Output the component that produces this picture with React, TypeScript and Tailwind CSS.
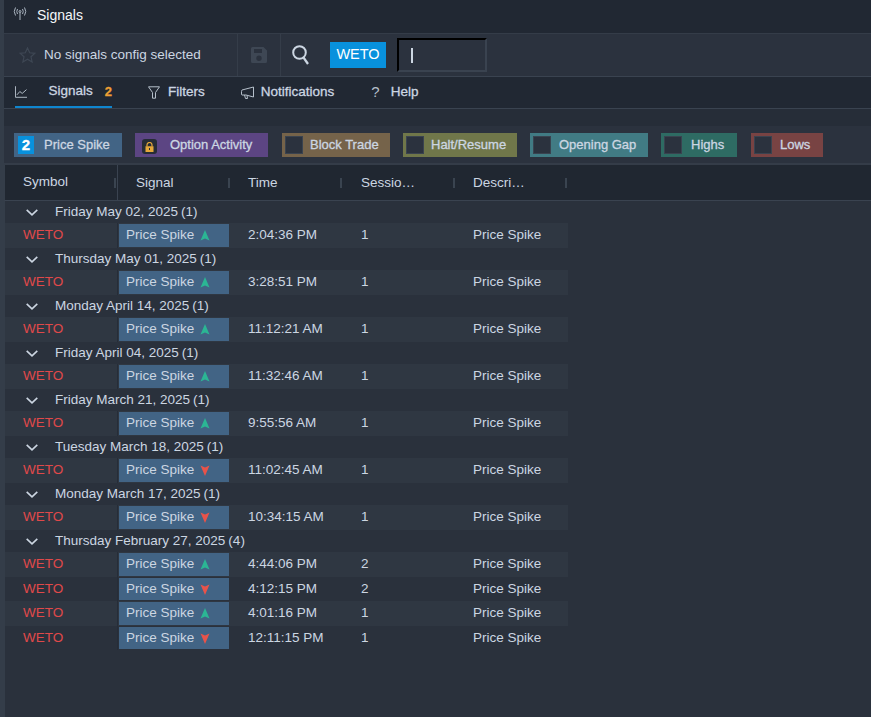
import React from "react";

const font = { fontFamily: '"Liberation Sans", Arial, sans-serif' };

function Tri({ up }: { up: boolean }) {
  return (
    <svg width="10" height="11" viewBox="0 0 10 11" className="ml-[6px]">
      {up ? <path d="M5 0 L9.5 10.5 L5 8.5 L0.5 10.5 Z" fill="#2bb694" /> : <path d="M5 11 L9.5 0.5 L5 2.5 L0.5 0.5 Z" fill="#e8534a" />}
    </svg>
  );
}

function Antenna() {
  return (
    <svg width="14" height="14" viewBox="0 0 14 14" fill="none" stroke="#aab4c0" strokeWidth="1">
      <circle cx="7" cy="4.5" r="1" />
      <path d="M7 5.5 L7 13" />
      <path d="M4.5 2 Q3 4.5 4.5 7 M9.5 2 Q11 4.5 9.5 7 M2.5 0.5 Q0 4.5 2.5 8.5 M11.5 0.5 Q14 4.5 11.5 8.5" />
    </svg>
  );
}

function StarIcon() {
  return (
    <svg width="17" height="16" viewBox="0 0 17 16" fill="none" stroke="#3e4754" strokeWidth="1.2">
      <path d="M8.5 1 L10.7 5.8 L15.9 6.3 L12 9.8 L13.1 15 L8.5 12.3 L3.9 15 L5 9.8 L1.1 6.3 L6.3 5.8 Z" />
    </svg>
  );
}

function SaveIcon() {
  return (
    <svg width="16" height="16" viewBox="0 0 16 16">
      <path fillRule="evenodd" d="M1.5 0 H12.5 L16 3.5 V14.5 A1.5 1.5 0 0 1 14.5 16 H1.5 A1.5 1.5 0 0 1 0 14.5 V1.5 A1.5 1.5 0 0 1 1.5 0 Z M3 2 V6 H11 V2 Z M8 8.5 A2.7 2.7 0 1 0 8 13.9 A2.7 2.7 0 1 0 8 8.5 Z" fill="#3e4754" />
    </svg>
  );
}

function SearchIcon() {
  return (
    <svg width="18" height="20" viewBox="0 0 18 20" fill="none" stroke="#ccd6e2" strokeWidth="2">
      <circle cx="7.5" cy="7.5" r="6.3" />
      <path d="M11.5 12.5 L16 19" strokeWidth="2.2" />
    </svg>
  );
}

function ChartIcon() {
  return (
    <svg width="13" height="12" viewBox="0 0 13 12" fill="none" stroke="#b5bfca" strokeWidth="1">
      <path d="M0.5 0 V11.5 H13" />
      <path d="M2 9 L5 5.5 L7.5 7.5 L12 3.5" />
    </svg>
  );
}

function FilterIcon() {
  return (
    <svg width="12" height="13" viewBox="0 0 12 13" fill="none" stroke="#b5bfca" strokeWidth="1">
      <path d="M0.5 0.8 H11.5 L7.5 6.5 V12.2 H4.5 V6.5 Z" />
    </svg>
  );
}

function HornIcon() {
  return (
    <svg width="13" height="13" viewBox="0 0 13 13" fill="none" stroke="#b5bfca" strokeWidth="1">
      <path d="M12.5 1 V11 L5 9 H1 Q0.5 9 0.5 8 V5.5 Q0.5 4.5 1 4 Z" />
      <path d="M3.5 9 L4.5 12.5 H6.5 L6 9.5" />
    </svg>
  );
}

function LockIcon() {
  return (
    <svg width="9" height="10" viewBox="0 0 9 10">
      <path d="M2 4.5 V3 A2.5 2.5 0 0 1 7 3 V4.5" fill="none" stroke="#e6a83a" strokeWidth="1.2" />
      <path fillRule="evenodd" d="M0.5 4.2 H8.5 V10 H0.5 Z M4 6 V8 H5 V6 Z" fill="#e6a83a" />
    </svg>
  );
}

function Chevron() {
  return (
    <svg width="12" height="7" viewBox="0 0 12 7" fill="none" stroke="#ccd6e2" strokeWidth="1.6">
      <path d="M0.7 0.8 L6 5.8 L11.3 0.8" />
    </svg>
  );
}

const chips = [
  { label: "Price Spike", bg: "bg-[#426485]", w: "w-[108px]", ml: "ml-[10px]", kind: "num", pad: "pl-[10px]" },
  { label: "Option Activity", bg: "bg-[#5c4583]", w: "w-[133px]", ml: "ml-[13px]", kind: "lock", pad: "pl-[13px]" },
  { label: "Block Trade", bg: "bg-[#75634a]", w: "w-[108px]", ml: "ml-[14px]", kind: "box", pad: "pl-[7px]" },
  { label: "Halt/Resume", bg: "bg-[#70774a]", w: "w-[114px]", ml: "ml-[13px]", kind: "box", pad: "pl-[7px]" },
  { label: "Opening Gap", bg: "bg-[#417b84]", w: "w-[118px]", ml: "ml-[13px]", kind: "box", pad: "pl-[8px]" },
  { label: "Highs", bg: "bg-[#2e6b63]", w: "w-[76px]", ml: "ml-[13px]", kind: "box", pad: "pl-[9px]" },
  { label: "Lows", bg: "bg-[#784343]", w: "w-[72px]", ml: "ml-[14px]", kind: "box", pad: "pl-[8px]" },
];

const groups: { date: string; rows: [string, string, boolean][] }[] = [
  { date: "Friday May 02, 2025", rows: [["2:04:36 PM", "1", true]] },
  { date: "Thursday May 01, 2025", rows: [["3:28:51 PM", "1", true]] },
  { date: "Monday April 14, 2025", rows: [["11:12:21 AM", "1", true]] },
  { date: "Friday April 04, 2025", rows: [["11:32:46 AM", "1", true]] },
  { date: "Friday March 21, 2025", rows: [["9:55:56 AM", "1", true]] },
  { date: "Tuesday March 18, 2025", rows: [["11:02:45 AM", "1", false]] },
  { date: "Monday March 17, 2025", rows: [["10:34:15 AM", "1", false]] },
  {
    date: "Thursday February 27, 2025",
    rows: [
      ["4:44:06 PM", "2", true],
      ["4:12:15 PM", "2", false],
      ["4:01:16 PM", "1", true],
      ["12:11:15 PM", "1", false],
    ],
  },
];

function Grip() {
  return <div className="w-[2px] h-[10px] bg-[#3a4450] shrink-0" />;
}

function Head({ label, w, pl }: { label: string; w: string; pl: string }) {
  return (
    <div className={`${w} ${pl} flex items-center justify-between h-full shrink-0 pt-[1px]`}>
      <span>{label}</span>
      <Grip />
    </div>
  );
}

export default function App() {
  return (
    <div style={font} className="w-[871px] h-[717px] overflow-hidden flex bg-[#2a313c] text-[#ccd6e2] text-[13.5px]">
      <div className="w-[4px] shrink-0 bg-[#343d49]" />
      <div className="flex-1 min-w-0 flex flex-col">
        {/* title */}
        <div className="h-[34px] bg-[#212833] flex items-center pl-[9px] shrink-0 border-b border-[#343c48]">
          <div className="-mt-[5px]"><Antenna /></div>
          <span className="ml-[10px] text-[14px] text-[#f4f7fa] -mt-[2px]">Signals</span>
        </div>
        {/* toolbar */}
        <div className="h-[43px] bg-[#2b323e] flex items-center shrink-0 border-b border-[#3a4350]">
          <div className="w-[234px] h-full flex items-center pl-[15px] border-r border-[#353d49] shrink-0">
            <StarIcon />
            <span className="ml-[8px] text-[13.5px]">No signals config selected</span>
          </div>
          <div className="w-[43px] h-full flex items-center justify-center border-r border-[#353d49] shrink-0">
            <SaveIcon />
          </div>
          <div className="ml-[11px] w-[18px] flex items-center justify-center">
            <SearchIcon />
          </div>
          <div className="ml-[20px] w-[56px] h-[26px] bg-[#0891dd] text-white text-[14.5px] flex items-center justify-center">WETO</div>
          <div className="ml-[11px] w-[90px] h-[34px] border-[2px] border-t-black border-l-black border-r-[#3a4350] border-b-[#3a4350] flex items-center pl-[12px] shrink-0">
            <div className="w-[2px] h-[15px] bg-[#ccd6e2]" />
          </div>
        </div>
        {/* tabs */}
        <div className="h-[32px] bg-[#212833] flex items-start shrink-0 border-b border-[#3a4350] text-[13.5px] [-webkit-text-stroke:0.3px]">
          <div className="ml-[11px] h-[31px] w-[97px] border-b-2 border-[#0f86cf] flex items-center">
            <ChartIcon />
            <span className="ml-[21px]">Signals</span>
            <span className="ml-[12px] text-[13px] text-[#efa034] font-bold">2</span>
          </div>
          <div className="ml-[36px] h-[30px] flex items-center">
            <FilterIcon />
            <span className="ml-[8px]">Filters</span>
          </div>
          <div className="ml-[36px] h-[30px] flex items-center">
            <HornIcon />
            <span className="ml-[7px]">Notifications</span>
          </div>
          <div className="ml-[37px] h-[30px] flex items-center">
            <span className="text-[15px] [-webkit-text-stroke:0px] text-[#b5bfca]">?</span>
            <span className="ml-[11px]">Help</span>
          </div>
        </div>
        <div className="h-[17px] bg-[#262d38] shrink-0" />
        {/* chips */}
        <div className="h-[39px] bg-[#2b323e] flex items-center shrink-0 border-b-2 border-[#343c48] pt-[1px]">
          {chips.map((c) => (
            <div key={c.label} className={`${c.ml} ${c.w} ${c.bg} h-[24px] flex items-center shrink-0 text-[13px] [-webkit-text-stroke:0.3px]`}>
              {c.kind === "num" && <div className="ml-[4px] w-[16px] h-[18px] bg-[#0891dd] text-white text-[15px] flex items-center justify-center font-bold">2</div>}
              {c.kind === "lock" && (
                <div className="ml-[7px] w-[15px] h-[15px] rounded-[3px] bg-[#262c36] flex items-center justify-center mt-[3px]">
                  <LockIcon />
                </div>
              )}
              {c.kind === "box" && <div className="ml-[3px] w-[18px] h-[18px] bg-[#2b323e] border border-[#3a4350]" />}
              <span className={c.pad}>{c.label}</span>
            </div>
          ))}
        </div>
        {/* header */}
        <div className="h-[36px] bg-[#202731] flex items-center shrink-0 border-b border-l border-[#343d49] border-b-[#3a4350]">
          <div className="w-[113px] h-full flex items-center justify-between pl-[18px] border-r border-[#3a4350] shrink-0 pb-[1px]">
            <span>Symbol</span>
            <div className="mr-[1px] mt-[2px]"><Grip /></div>
          </div>
          <Head label="Signal" w="w-[112px]" pl="pl-[18px]" />
          <Head label="Time" w="w-[112px]" pl="pl-[18px]" />
          <Head label="Sessio…" w="w-[113px]" pl="pl-[19px]" />
          <Head label="Descri…" w="w-[112px]" pl="pl-[18px]" />
        </div>
        {/* body */}
        <div className="flex flex-col flex-1 border-l border-[#343d49]">
          {groups.map((g) => (
            <div key={g.date} className="flex flex-col">
              <div className="h-[22px] flex items-center pl-[21px]">
                <Chevron />
                <span className="ml-[17px]">{g.date}</span>
                <span className="ml-[3px]">({g.rows.length})</span>
              </div>
              {g.rows.map((r, i) => (
                <div key={i} className={`w-[563px] flex items-center ${i % 2 === 0 ? "h-[25px] bg-[#2f3742]" : "h-[24px] bg-[#2a313c]"}`}>
                  <div className="w-[113px] h-full flex items-center pl-[18px] text-[#e0494a] shrink-0 border-r border-[#262d38]">WETO</div>
                  <div className="ml-[1px] w-[110px] self-stretch my-[1px] bg-[#426485] flex items-center pl-[7px] shrink-0">
                    <span>Price Spike</span>
                    <Tri up={r[2]} />
                  </div>
                  <div className="w-[113px] pl-[19px] shrink-0">{r[0]}</div>
                  <div className="w-[112px] pl-[19px] shrink-0">{r[1]}</div>
                  <div className="pl-[19px]">Price Spike</div>
                </div>
              ))}
            </div>
          ))}
        </div>
      </div>
    </div>
  );
}
